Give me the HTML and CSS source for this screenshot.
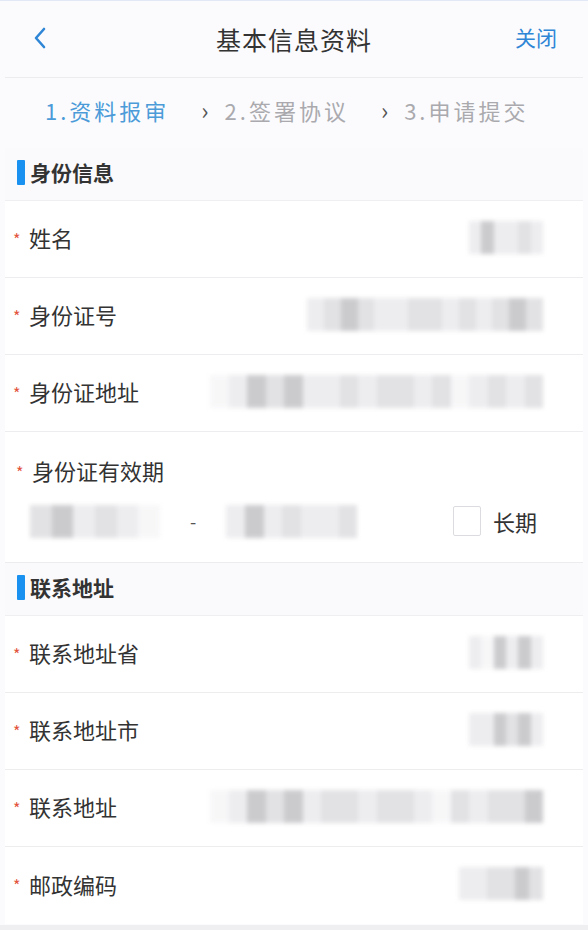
FILE: index.html
```html
<!DOCTYPE html>
<html lang="zh">
<head>
<meta charset="utf-8">
<title>基本信息资料</title>
<link rel="stylesheet" href="styles.css">
</head>
<body>
<div class="page">
  <header class="nav">
    <span class="back"><svg width="16" height="24" viewBox="0 0 16 24"><polyline points="12,3 4,12 12,21" fill="none" stroke="#2f86d6" stroke-width="2.6" stroke-linecap="round" stroke-linejoin="round"/></svg></span>
    <h1 class="title">基本信息资料</h1>
    <span class="close">关闭</span>
  </header>
  <nav class="steps">
    <span class="step active">1.资料报审</span>
    <span class="sep">›</span>
    <span class="step">2.签署协议</span>
    <span class="sep">›</span>
    <span class="step">3.申请提交</span>
  </nav>

  <div class="section"><span class="bar"></span>身份信息</div>
  <div class="row">
    <span class="label"><i>*</i>姓名</span>
    <span class="blur w74"><b class="c1"></b><b class="c3"></b><b class="c1"></b><b class="c1"></b><b class="c2"></b><b class="c1"></b></span>
  </div>
  <div class="row">
    <span class="label"><i>*</i>身份证号</span>
    <span class="blur w236"><b class="c1"></b><b class="c2"></b><b class="c3"></b><b class="c2"></b><b class="c1"></b><b class="c1"></b><b class="c2"></b><b class="c2"></b><b class="c1"></b><b class="c2"></b><b class="c1"></b><b class="c2"></b><b class="c3"></b><b class="c2"></b></span>
  </div>
  <div class="row">
    <span class="label"><i>*</i>身份证地址</span>
    <span class="blur w333"><b class="c0"></b><b class="c1"></b><b class="c3"></b><b class="c2"></b><b class="c3"></b><b class="c1"></b><b class="c1"></b><b class="c2"></b><b class="c1"></b><b class="c2"></b><b class="c2"></b><b class="c1"></b><b class="c2"></b><b class="c0"></b><b class="c1"></b><b class="c2"></b><b class="c1"></b><b class="c2"></b></span>
  </div>
  <div class="validity">
    <div class="label vlabel"><i>*</i>身份证有效期</div>
    <div class="dates">
      <span class="blur w130"><b class="c2"></b><b class="c3"></b><b class="c1"></b><b class="c2"></b><b class="c1"></b><b class="c0"></b></span>
      <span class="dash">-</span>
      <span class="blur w131"><b class="c1"></b><b class="c3"></b><b class="c1"></b><b class="c2"></b><b class="c1"></b><b class="c1"></b><b class="c2"></b></span>
      <span class="long"><span class="box"></span>长期</span>
    </div>
  </div>

  <div class="section"><span class="bar"></span>联系地址</div>
  <div class="row">
    <span class="label"><i>*</i>联系地址省</span>
    <span class="blur w74"><b class="c1"></b><b class="c0"></b><b class="c3"></b><b class="c1"></b><b class="c3"></b><b class="c1"></b></span>
  </div>
  <div class="row">
    <span class="label"><i>*</i>联系地址市</span>
    <span class="blur w74"><b class="c1"></b><b class="c1"></b><b class="c3"></b><b class="c2"></b><b class="c3"></b><b class="c1"></b></span>
  </div>
  <div class="row">
    <span class="label"><i>*</i>联系地址</span>
    <span class="blur w333"><b class="c0"></b><b class="c1"></b><b class="c3"></b><b class="c2"></b><b class="c3"></b><b class="c1"></b><b class="c2"></b><b class="c2"></b><b class="c1"></b><b class="c2"></b><b class="c2"></b><b class="c1"></b><b class="c0"></b><b class="c2"></b><b class="c1"></b><b class="c2"></b><b class="c2"></b><b class="c3"></b></span>
  </div>
  <div class="row last">
    <span class="label"><i>*</i>邮政编码</span>
    <span class="blur w84"><b class="c1"></b><b class="c1"></b><b class="c2"></b><b class="c2"></b><b class="c3"></b><b class="c2"></b></span>
  </div>
</div>
</body>
</html>
```

FILE: styles.css
```css
* { box-sizing: border-box; }
html, body { margin: 0; padding: 0; }
body {
  width: 588px;
  height: 930px;
  overflow: hidden;
  background: #efeff2;
  font-family: "Noto Sans CJK SC", "Noto Sans", sans-serif;
  color: #333;
}
.page {
  background: #fbfbfd;
  padding: 0 5px;
  height: 925px;
  border-top: 1px solid #e2e8f5;
}
.nav {
  height: 77px;
  display: flex;
  align-items: center;
  justify-content: space-between;
  padding: 0 26px 0 27px;
  border-bottom: 1px solid #ececef;
  position: relative;
}
.back { display: flex; align-items: center; margin-top: -3px; }
.title {
  margin: 0;
  font-size: 25px;
  line-height: 1;
  font-weight: 400;
  color: #333;
  letter-spacing: 1px;
  position: absolute;
  left: 0; right: 0;
  top: 26px;
  text-align: center;
  pointer-events: none;
}
.close { font-size: 21px; line-height: 1; color: #2f86d6; margin-top: -4px; }
.steps {
  height: 70px;
  display: flex;
  align-items: center;
  padding-left: 40px;
  padding-bottom: 6px;
  font-size: 22px;
  line-height: 1;
  letter-spacing: 3px;
  color: #aaaaae;
}
.step.active { color: #4c9bd9; }
.sep { font-size: 24px; color: #555; margin: 0 13px 0 32px; }
.section {
  height: 53px;
  display: flex;
  align-items: center;
  padding-left: 12px;
  padding-bottom: 4px;
  font-size: 21px;
  line-height: 1;
  font-weight: 700;
  color: #333;
  background: #fafafc;
  border-bottom: 1px solid #efeff2;
}
.bar {
  width: 8px;
  height: 25px;
  background: #1891f0;
  border-radius: 1px;
  margin-right: 5px;
}
.row {
  height: 77px;
  display: flex;
  align-items: center;
  justify-content: space-between;
  padding: 0 40px 4px 8px;
  background: #fff;
  border-bottom: 1px solid #ededf0;
}
.row.last { border-bottom: none; height: 77px; }
.label { font-size: 22px; line-height: 1; color: #333; display: flex; align-items: center; }
.label i {
  font-style: normal;
  color: #e2543d;
  font-size: 16px;
  width: 16px;
  padding-top: 3px;
}
.blur {
  display: flex;
  height: 33px;
  filter: blur(2px);
  opacity: 0.7;
}
.blur b { flex: 1; }
.c0 { background: #f4f4f6; }
.c1 { background: #e6e5e9; }
.c2 { background: #d6d5d9; }
.c3 { background: #b6b5b9; }
.w74 { width: 74px; }
.w84 { width: 84px; }
.w130 { width: 130px; }
.w131 { width: 131px; }
.w236 { width: 236px; }
.w333 { width: 333px; }
.validity {
  height: 131px;
  background: #fff;
  border-bottom: 1px solid #ececef;
  padding: 0 40px 0 8px;
}
.vlabel { height: 58px; padding-top: 18px; padding-left: 3px; }
.dates {
  height: 62px;
  display: flex;
  align-items: center;
  padding-left: 17px;
}
.dash { margin: 0 30px 0 30px; font-size: 18px; line-height: 1; color: #555; }
.long {
  margin-left: auto;
  display: flex;
  align-items: center;
  font-size: 22px;
  line-height: 1;
  color: #333;
  margin-right: 6px;
}
.box {
  width: 28px;
  height: 30px;
  border: 1px solid #dcdce0;
  border-radius: 2px;
  margin-right: 12px;
  background: #fff;
}
```
